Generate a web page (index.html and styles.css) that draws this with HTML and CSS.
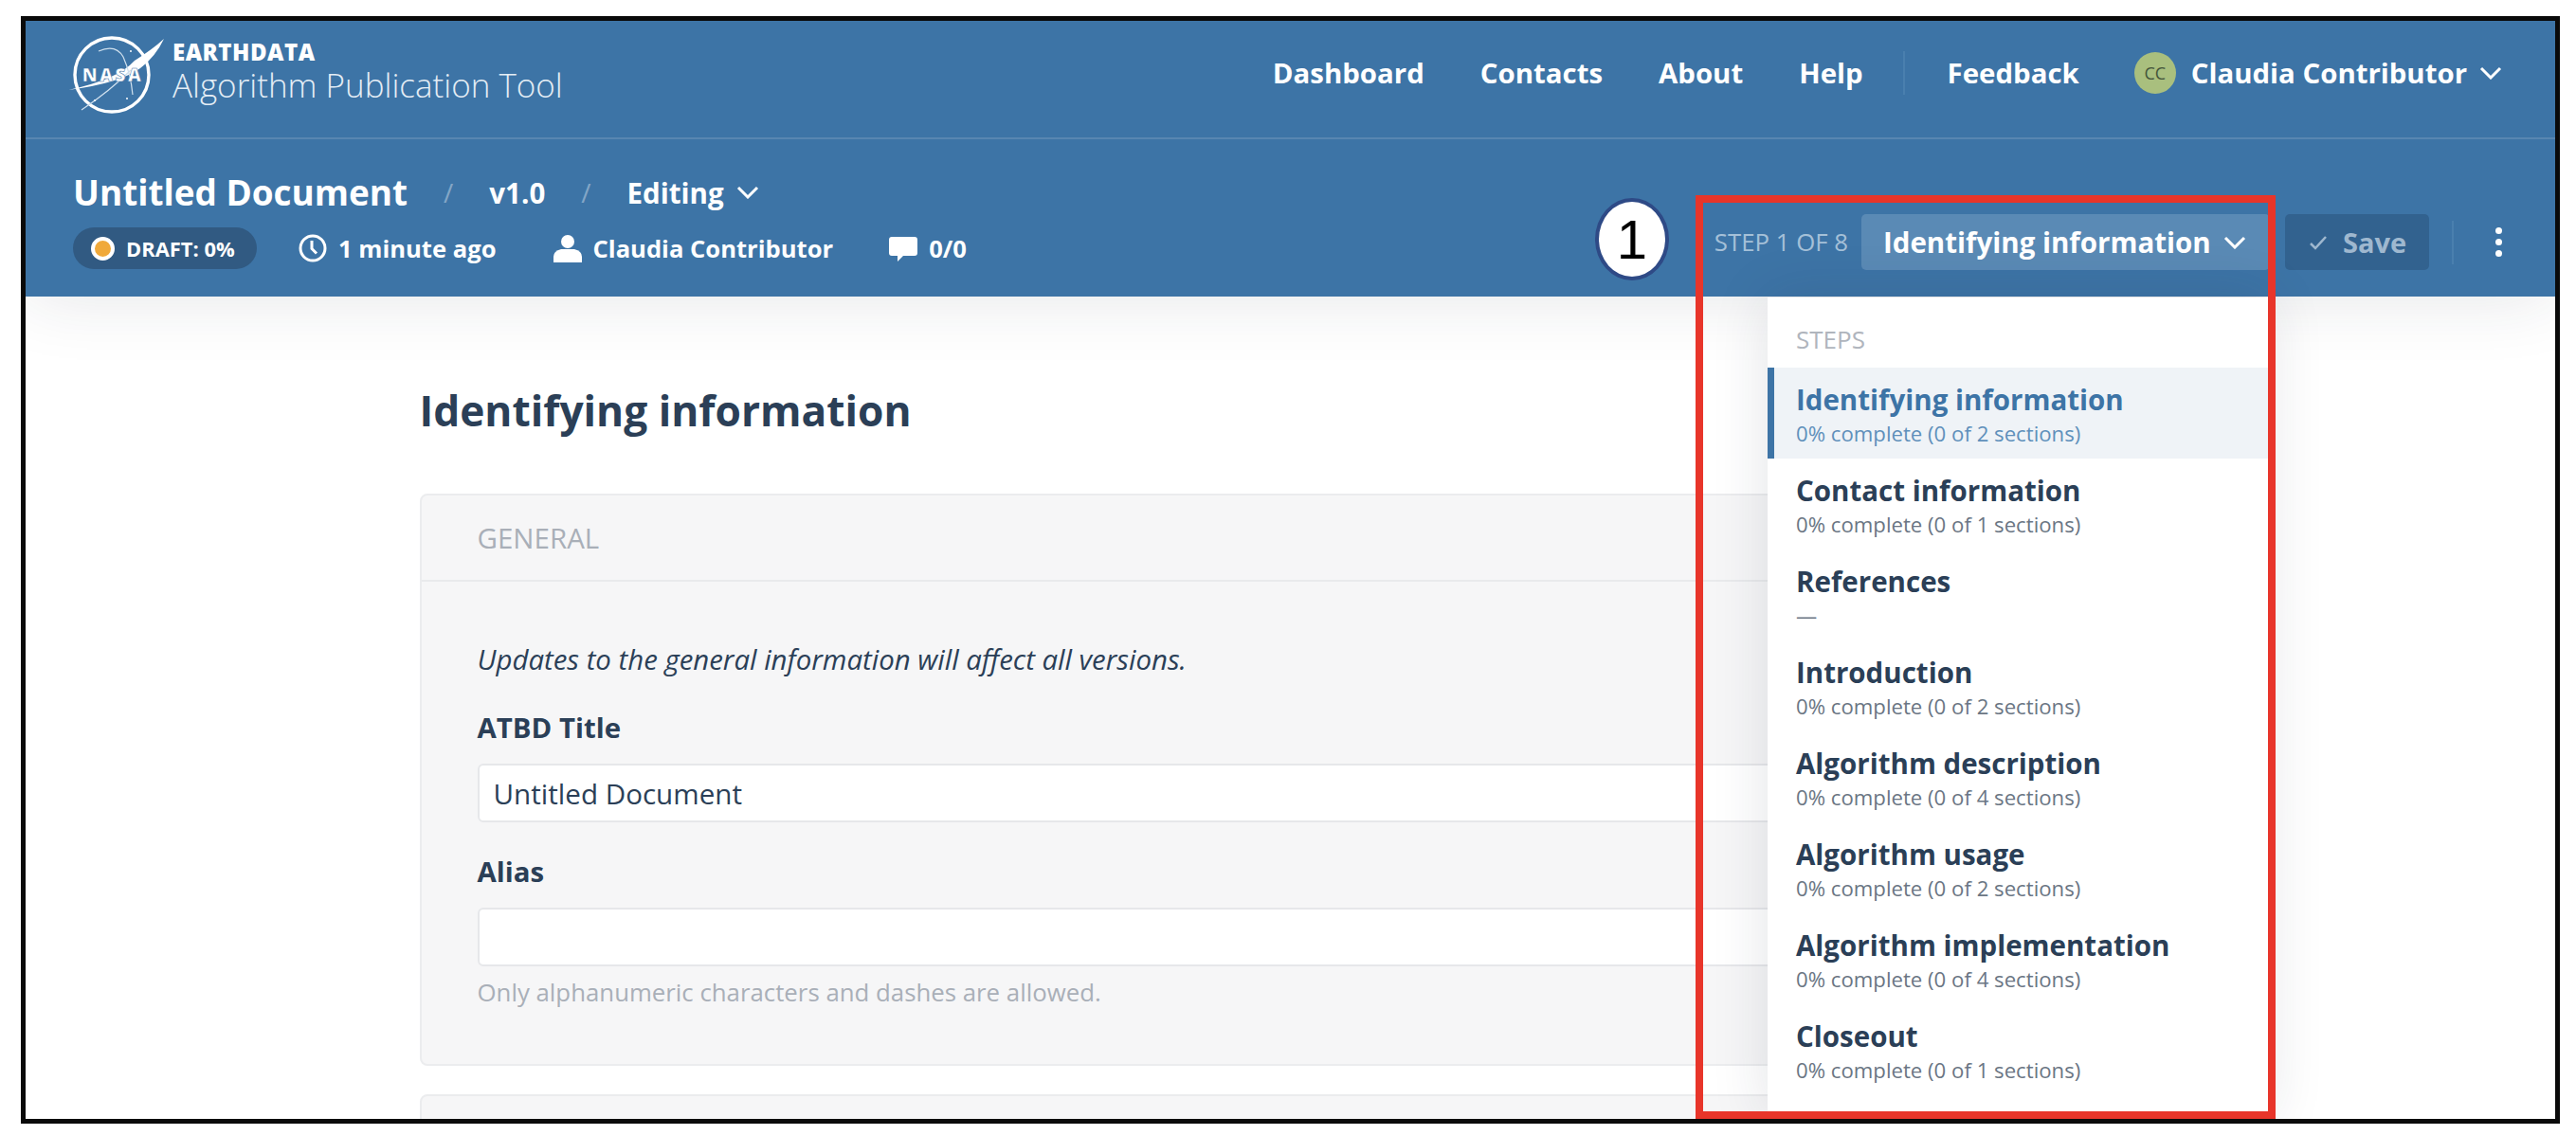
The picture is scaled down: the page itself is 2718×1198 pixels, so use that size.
FILE: index.html
```html
<!DOCTYPE html>
<html lang="en">
<head>
<meta charset="utf-8">
<title>Algorithm Publication Tool</title>
<link rel="stylesheet" href="styles.css">
</head>
<body>
<div class="frame">
  <header class="header">
    <div class="topbar">
      <a class="brand">
        <svg class="logo" viewBox="0 0 100 90" aria-hidden="true">
          <circle cx="42" cy="45" r="39" fill="none" stroke="#fff" stroke-width="3.4"/>
          <path d="M-4 61 Q48 50 66 30 Q85 18 97 7 Q88 26 72 38 Q50 54 -4 61Z" fill="#fff"/>
          <path d="M10 82 Q40 62 62 40 M28 20 Q46 12 54 26 Q62 44 64 66" fill="none" stroke="#cfe0ee" stroke-width="1.2"/>
          <circle cx="62" cy="20" r="1" fill="#fff"/><circle cx="24" cy="72" r="1" fill="#fff"/><circle cx="58" cy="70" r="1" fill="#fff"/>
          <text class="logo-text" x="43" y="52" text-anchor="middle">NASA</text>
        </svg>
        <span class="brand-text">
          <span class="brand-top">EARTHDATA</span>
          <span class="brand-name">Algorithm Publication Tool</span>
        </span>
      </a>
      <nav class="nav">
        <a class="nav-link">Dashboard</a>
        <a class="nav-link">Contacts</a>
        <a class="nav-link">About</a>
        <a class="nav-link">Help</a>
        <span class="nav-divider"></span>
        <a class="nav-link">Feedback</a>
        <a class="user">
          <span class="avatar">CC</span>
          <span class="nav-link">Claudia Contributor</span>
          <svg class="chev" viewBox="0 0 24 14"><path d="M2 2l10 10L22 2"/></svg>
        </a>
      </nav>
    </div>
    <div class="docbar">
      <div class="docinfo">
        <div class="crumbs">
          <h2 class="doc-title">Untitled Document</h2>
          <span class="slash">/</span>
          <span class="crumb">v1.0</span>
          <span class="slash">/</span>
          <span class="crumb">Editing</span>
          <svg class="chev" viewBox="0 0 24 14"><path d="M2 2l10 10L22 2"/></svg>
        </div>
        <div class="meta">
          <span class="pill"><i class="dot"></i>DRAFT: 0%</span>
          <span class="meta-item meta-time">
            <svg class="meta-icon" viewBox="0 0 30 30"><circle cx="15" cy="15" r="13" fill="none" stroke="#fff" stroke-width="3"/><path d="M14 7v8.5l5 5" fill="none" stroke="#fff" stroke-width="3"/></svg>
            1 minute ago
          </span>
          <span class="meta-item meta-user">
            <svg class="meta-icon" viewBox="0 0 30 30"><circle cx="15" cy="8" r="7" fill="#fff"/><path d="M0 30v-6q0-6 8-8h14q8 2 8 8v6z" fill="#fff"/></svg>
            Claudia Contributor
          </span>
          <span class="meta-item meta-comments">
            <svg class="meta-icon" viewBox="0 0 30 30"><path d="M3 3h24q3 0 3 3v14q0 3-3 3H15l-6 6v-6H3q-3 0-3-3V6q0-3 3-3z" fill="#fff"/></svg>
            0/0
          </span>
        </div>
      </div>
      <div class="actions">
        <span class="step-count">STEP 1 OF 8</span>
        <button class="step-btn">Identifying information<svg class="chev" viewBox="0 0 24 14"><path d="M2 2l10 10L22 2"/></svg></button>
        <button class="save-btn"><svg class="check" viewBox="0 0 20 16"><path d="M2 9l5 5L18 2"/></svg>Save</button>
        <span class="act-divider"></span>
        <span class="kebab"><i></i><i></i><i></i></span>
      </div>
    </div>
  </header>

  <main class="main">
    <h1 class="page-title">Identifying information</h1>
    <section class="card">
      <h3 class="card-head">GENERAL</h3>
      <div class="card-body">
        <p class="note">Updates to the general information will affect all versions.</p>
        <label class="label">ATBD Title</label>
        <div class="input">Untitled Document</div>
        <label class="label label-alias">Alias</label>
        <div class="input"></div>
        <p class="help">Only alphanumeric characters and dashes are allowed.</p>
      </div>
    </section>
    <section class="card card-next"></section>
  </main>

  <aside class="menu">
    <div class="menu-head">STEPS</div>
    <a class="step active"><strong>Identifying information</strong><span>0% complete (0 of 2 sections)</span></a>
    <a class="step"><strong>Contact information</strong><span>0% complete (0 of 1 sections)</span></a>
    <a class="step"><strong>References</strong><span>—</span></a>
    <a class="step"><strong>Introduction</strong><span>0% complete (0 of 2 sections)</span></a>
    <a class="step"><strong>Algorithm description</strong><span>0% complete (0 of 4 sections)</span></a>
    <a class="step"><strong>Algorithm usage</strong><span>0% complete (0 of 2 sections)</span></a>
    <a class="step"><strong>Algorithm implementation</strong><span>0% complete (0 of 4 sections)</span></a>
    <a class="step"><strong>Closeout</strong><span>0% complete (0 of 1 sections)</span></a>
  </aside>

  <div class="callout-box"></div>
  <div class="callout-num">1</div>
</div>
</body>
</html>
```

FILE: styles.css
```css
* { box-sizing: border-box; }
html, body { margin: 0; padding: 0; overflow: hidden; background: #fff; }
body { font-family: "Open Sans", "Liberation Sans", sans-serif; color: #2b3f57; }

.frame {
  position: relative;
  width: 2679px;
  height: 1169px;
  margin: 17px 0 0 22px;
  border: 5px solid #0a0a0a;
  overflow: hidden;
  background: #fff;
}

/* Header */
.header {
  position: relative;
  z-index: 1;
  background: #3d74a6;
  color: #fff;
  box-shadow: 0 0 70px rgba(30, 40, 60, .12);
}
.topbar {
  display: flex;
  align-items: center;
  justify-content: space-between;
  height: 125px;
  padding: 0 56px 14px 49px;
  border-bottom: 2px solid #5886b1;
}
.brand { display: flex; align-items: center; gap: 11px; }
.logo { width: 100px; height: 90px; display: block; margin-top: 4px; overflow: visible; }
.logo-text { font-size: 19px; font-weight: 800; letter-spacing: 2.5px; fill: #fff; font-family: "Open Sans", sans-serif; stroke: #3d74a6; stroke-width: .5px; }
.brand-text { display: flex; flex-direction: column; margin-left: -5px; }
.brand-top { font-size: 24px; font-weight: 800; line-height: 26px; letter-spacing: .5px; }
.brand-name { font-size: 35px; font-weight: 300; line-height: 44px; color: #e4edf5; white-space: nowrap; }
.nav { display: flex; align-items: center; }
.nav-link { font-size: 29.4px; font-weight: 700; line-height: 40px; margin-left: 59px; white-space: nowrap; }
.nav-divider { width: 2px; height: 46px; background: #4a7fae; margin-left: 42px; margin-right: -14px; }
.user { display: flex; align-items: center; margin-left: 58px; }
.user .nav-link { margin-left: 16px; }
.avatar {
  width: 44px; height: 44px; border-radius: 50%;
  display: flex; align-items: center; justify-content: center;
  background: #a9bf7e; color: #44553a; font-size: 18px; font-weight: 400;
}
.chev { width: 24px; height: 14px; fill: none; stroke: currentColor; stroke-width: 3; flex: none; }
.user .chev { margin-left: 13px; }

.docbar {
  display: flex;
  justify-content: space-between;
  height: 166px;
  padding: 0 56px 0 50px;
}
.crumbs { display: flex; align-items: center; height: 44px; margin-top: 34px; }
.doc-title { margin: 0; font-size: 36.9px; font-weight: 700; line-height: 44px; white-space: nowrap; }
.slash { font-size: 28px; color: #83a6c6; margin: 0 38px; }
.crumb { font-size: 29.5px; font-weight: 700; white-space: nowrap; }
.crumbs .chev { margin-left: 13px; }
.meta { display: flex; align-items: center; margin-top: 15px; font-size: 25.6px; font-weight: 700; white-space: nowrap; }
.pill {
  display: flex; align-items: center; height: 44px; width: 194px; padding-left: 19px;
  background: #315a82; border-radius: 22px; font-size: 21.9px;
}
.dot { width: 25px; height: 25px; border-radius: 50%; background: #f0a93a; border: 4px solid #fff; margin-right: 12px; flex: none; }
.meta-item { display: flex; align-items: center; }
.meta-icon { width: 30px; height: 30px; margin-right: 12px; flex: none; }
.meta-time { margin-left: 44px; }
.meta-user { margin-left: 60px; }
.meta-comments { margin-left: 59px; }

.actions { display: flex; align-items: center; height: 59px; margin-top: 79px; }
.step-count { font-size: 25.8px; color: #a5c0d8; white-space: nowrap; margin-right: 14px; margin-top: -2px; }
.step-btn {
  display: flex; align-items: center; width: 431px; height: 59px; padding: 0 0 0 23px;
  border: 0; border-radius: 5px; background: #5a8ab5; color: #fff;
  font: 700 29.5px "Open Sans", sans-serif; white-space: nowrap;
}
.step-btn .chev { margin-left: 13px; }
.save-btn {
  display: flex; align-items: center; width: 152px; height: 59px; padding: 0 0 0 25px; margin-left: 16px;
  border: 0; border-radius: 5px; background: #32628f; color: #9fb8cf;
  font: 700 29px "Open Sans", sans-serif;
}
.check { width: 20px; height: 16px; fill: none; stroke: #9fb8cf; stroke-width: 2.5; margin-right: 16px; }
.act-divider { width: 2px; height: 46px; background: #4a7fae; margin-left: 24px; }
.kebab { display: flex; flex-direction: column; gap: 5px; margin-left: 44px; }
.kebab i { width: 7px; height: 7px; border-radius: 50%; background: #fff; display: block; }

/* Main */
.main { width: 1838px; margin: 0 auto; }
.page-title { margin: 0; padding-top: 92px; font-size: 44.3px; font-weight: 700; line-height: 56px; color: #2b3f57; white-space: nowrap; }
.card {
  margin-top: 60px;
  height: 604px;
  background: #f6f6f7;
  border: 2px solid #ebecee;
  border-radius: 8px;
}
.card-next { margin-top: 30px; height: 200px; }
.card-head {
  margin: 0; height: 91px; padding: 0 59px;
  display: flex; align-items: center;
  font-size: 29.5px; font-weight: 400; color: #a9afb8;
  border-bottom: 2px solid #e9eaec;
}
.card-body { padding: 60px 59px 0; }
.note { margin: 0; font-size: 29.4px; font-style: italic; line-height: 44px; color: #2b3f57; white-space: nowrap; }
.label { display: block; margin-top: 31px; font-size: 29.4px; font-weight: 700; line-height: 38px; color: #2b3f57; }
.label-alias { margin-top: 33px; }
.input {
  height: 62px; margin-top: 19px; padding: 0 15px;
  display: flex; align-items: center;
  background: #fff; border: 2px solid #e6e7ea; border-radius: 6px;
  font-size: 29.6px; color: #2b3f57;
}
.help { margin: 9px 0 0; font-size: 25.8px; line-height: 36px; color: #a9afb8; white-space: nowrap; }

/* Dropdown */
.menu {
  position: absolute;
  z-index: 2;
  left: 1838px;
  top: 292px;
  width: 528px;
  height: 866px;
  background: #fff;
  border-radius: 0 0 6px 6px;
  box-shadow: 0 0 60px rgba(30, 40, 60, .13);
}
.menu-head { height: 74px; padding: 28px 0 0 30px; font-size: 26px; line-height: 32px; color: #b0b5bd; }
.step { display: flex; flex-direction: column; height: 96px; padding: 13px 0 0 30px; }
.step strong { font-size: 29.5px; font-weight: 700; line-height: 42px; color: #2b3f57; white-space: nowrap; }
.step span { font-size: 22.2px; line-height: 30px; color: #6b7684; white-space: nowrap; }
.step.active { background: #eff3f7; border-left: 7px solid #3d74a6; padding-left: 23px; }
.step.active strong { color: #3d74a6; }
.step.active span { color: #5f90bb; }

/* Annotation */
.callout-box {
  position: absolute;
  z-index: 3;
  left: 1762px;
  top: 184px;
  width: 612px;
  height: 975px;
  border: 8px solid #e8352a;
  pointer-events: none;
}
.callout-num {
  position: absolute;
  z-index: 3;
  left: 1656px;
  top: 187px;
  width: 78px;
  height: 87px;
  display: flex; align-items: center; justify-content: center;
  border-radius: 50%;
  background: #fff;
  border: 4px solid #2e4a86;
  color: #000;
  font: 58px "Liberation Sans", sans-serif;
}
```
